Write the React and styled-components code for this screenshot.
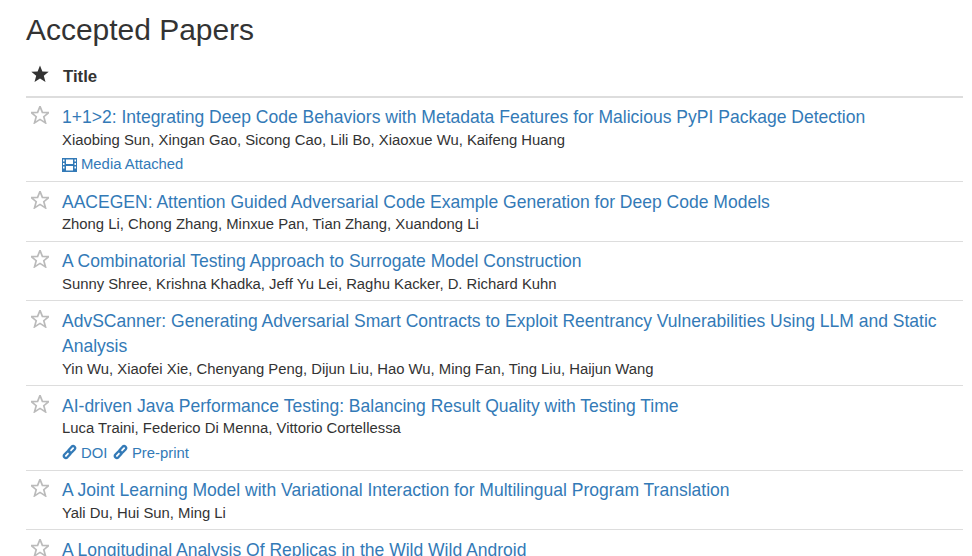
import React from "react";
import styled, { createGlobalStyle } from "styled-components";

const Global = createGlobalStyle`
  html, body {
    margin: 0;
    height: 556px;
    overflow: hidden;
    background: #fff;
    font-family: "Liberation Sans", Arial, sans-serif;
    font-size: 14.85px;
    line-height: 1.42857;
    color: #333;
  }
  * { box-sizing: border-box; }
`;

const Page = styled.div`
  padding: 0 9px 0 26px;
`;

const Heading = styled.h2`
  margin: 0;
  padding-top: 12px;
  font-size: 30px;
  font-weight: 500;
  line-height: 36px;
  letter-spacing: -0.03px;
`;

const HeaderRow = styled.div`
  display: flex;
  align-items: center;
  height: 49.7px;
  padding-top: 10px;
  border-bottom: 2px solid #ddd;
  font-size: 16.8px;
  font-weight: 700;
`;

const StarCell = styled.div`
  width: 36px;
  flex: none;
  padding: 1px 0 0 5px;
  line-height: 0;
`;

const HeaderStar = styled(StarCell)`
  padding-top: 0;
  padding-bottom: 6px;
`;

const HeaderTitle = styled.div`
  padding-left: 1px;
`;

const Row = styled.div`
  display: flex;
  padding: 7.4px 0 5.7px;
  border-bottom: 1px solid #ddd;
`;

const Body = styled.div`
  flex: 1;
`;

const PaperTitle = styled.a`
  display: block;
  font-size: 17.52px;
  line-height: 25.5px;
  color: #337ab7;
`;

const Authors = styled.div`
  line-height: 20px;
  margin: -0.9px 0 0.9px;
`;

const Links = styled.div`
  display: flex;
  gap: 5.5px;
  height: 24.9px;
  align-items: center;
  padding-top: 3px;
`;

const Resource = styled.a`
  display: flex;
  align-items: center;
  gap: 4px;
  color: #337ab7;
`;

const LinkGlyph = styled.svg`
  margin-top: -3px;
`;

const StarIcon = ({ filled }) => (
  <svg width="18" height="18" viewBox="0 0 18 18">
    <path
      d="M9 .4l2.4 6 6.3.3-4.9 4 1.7 6.2L9 13.4l-5.5 3.5 1.7-6.2-4.9-4 6.3-.3z"
      fill={filled ? "#333" : "none"}
      stroke={filled ? "none" : "#bbb"}
      strokeWidth="1.7"
    />
  </svg>
);

const FilmIcon = () => (
  <svg width="15" height="14" viewBox="0 0 15 14">
    <path
      fillRule="evenodd"
      fill="#337ab7"
      d="M0 0h15v14H0zM1 1.5h1.5v2H1zM1 5h1.5v2H1zM1 8.5h1.5v2H1zM12.5 1.5H14v2h-1.5zM12.5 5H14v2h-1.5zM12.5 8.5H14v2h-1.5zM4 1.5h7v4.5H4zM4 8h7v4.5H4z"
    />
  </svg>
);

const LinkIcon = () => (
  <LinkGlyph width="15" height="16" viewBox="0 0 15 15" fill="none" stroke="#337ab7" strokeWidth="2.3" strokeLinecap="round">
    <path d="M6.6 5.6 9.6 2.2c1-.9 2-.9 2.9-.1.9.9.9 2 .1 2.9L9.7 8c-.8.7-1.7.7-2.4 0" />
    <path d="M8.4 9.4 5.4 12.8c-1 .9-2 .9-2.9.1-.9-.9-.9-2-.1-2.9L5.3 7c.8-.7 1.7-.7 2.4 0" />
  </LinkGlyph>
);

const papers = [
  {
    title: "1+1>2: Integrating Deep Code Behaviors with Metadata Features for Malicious PyPI Package Detection",
    authors: "Xiaobing Sun, Xingan Gao, Sicong Cao, Lili Bo, Xiaoxue Wu, Kaifeng Huang",
    media: true,
  },
  {
    title: "AACEGEN: Attention Guided Adversarial Code Example Generation for Deep Code Models",
    authors: "Zhong Li, Chong Zhang, Minxue Pan, Tian Zhang, Xuandong Li",
  },
  {
    title: "A Combinatorial Testing Approach to Surrogate Model Construction",
    authors: "Sunny Shree, Krishna Khadka, Jeff Yu Lei, Raghu Kacker, D. Richard Kuhn",
  },
  {
    title: "AdvSCanner: Generating Adversarial Smart Contracts to Exploit Reentrancy Vulnerabilities Using LLM and Static Analysis",
    authors: "Yin Wu, Xiaofei Xie, Chenyang Peng, Dijun Liu, Hao Wu, Ming Fan, Ting Liu, Haijun Wang",
  },
  {
    title: "AI-driven Java Performance Testing: Balancing Result Quality with Testing Time",
    authors: "Luca Traini, Federico Di Menna, Vittorio Cortellessa",
    doi: true,
  },
  {
    title: "A Joint Learning Model with Variational Interaction for Multilingual Program Translation",
    authors: "Yali Du, Hui Sun, Ming Li",
  },
  {
    title: "A Longitudinal Analysis Of Replicas in the Wild Wild Android",
    authors: "",
  },
];

export default function App() {
  return (
    <Page>
      <Global />
      <Heading>Accepted Papers</Heading>
      <HeaderRow>
        <HeaderStar>
          <StarIcon filled />
        </HeaderStar>
        <HeaderTitle>Title</HeaderTitle>
      </HeaderRow>
      {papers.map((p) => (
        <Row key={p.title}>
          <StarCell>
            <StarIcon />
          </StarCell>
          <Body>
            <PaperTitle>{p.title}</PaperTitle>
            <Authors>{p.authors}</Authors>
            {p.media && (
              <Links>
                <Resource>
                  <FilmIcon />
                  Media Attached
                </Resource>
              </Links>
            )}
            {p.doi && (
              <Links>
                <Resource>
                  <LinkIcon />
                  DOI
                </Resource>
                <Resource>
                  <LinkIcon />
                  Pre-print
                </Resource>
              </Links>
            )}
          </Body>
        </Row>
      ))}
    </Page>
  );
}
